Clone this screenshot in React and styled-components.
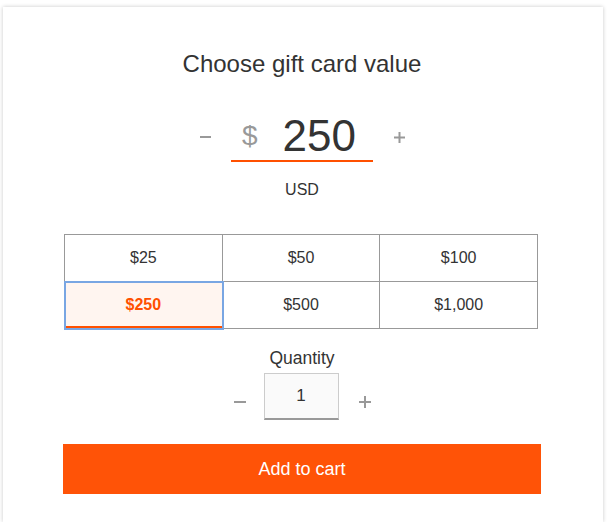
import React, { useState } from "react";
import styled, { createGlobalStyle } from "styled-components";

const GlobalStyle = createGlobalStyle`
  body {
    margin: 0;
    background: #ffffff;
    font-family: "Liberation Sans", Arial, sans-serif;
    color: #333333;
  }
`;

const Page = styled.div`
  padding: 7px 0 0 3px;
`;

const Card = styled.div`
  box-sizing: border-box;
  width: 600px;
  padding: 43px 62px 28px 60px;
  background: #ffffff;
  box-shadow: 0 0 4px rgba(0, 0, 0, 0.22);
  display: flex;
  flex-direction: column;
  align-items: center;
`;

const Title = styled.h1`
  margin: 0;
  font-size: 24px;
  line-height: 28px;
  font-weight: 400;
  color: #333333;
`;

const AmountRow = styled.div`
  margin-top: 34px;
  display: flex;
  align-items: center;
`;

const StepButton = styled.button`
  border: 0;
  background: none;
  padding: 0;
  width: 24px;
  height: 24px;
  margin-left: ${({ shift }) => shift || 0}px;
  display: flex;
  align-items: center;
  justify-content: center;
  color: #999999;
  cursor: pointer;
`;

const QtyStep = styled(StepButton)`
  margin-bottom: 6px;
`;

const AmountField = styled.div`
  box-sizing: border-box;
  margin: 0 14px;
  width: 142px;
  height: 50px;
  padding-left: 11px;
  border-bottom: 2px solid #ff5000;
  display: flex;
  align-items: center;
  gap: 25px;
`;

const Currency = styled.span`
  font-size: 28px;
  color: #999999;
`;

const Amount = styled.span`
  font-size: 44px;
  line-height: 50px;
  color: #333333;
`;

const Unit = styled.div`
  margin-top: 18px;
  font-size: 16px;
  line-height: 20px;
`;

const Options = styled.div`
  margin: 34px 3px 0 1px;
  align-self: stretch;
  display: grid;
  grid-template-columns: repeat(3, 1fr);
  border-top: 1px solid #999999;
  border-left: 1px solid #999999;
`;

const Option = styled.button`
  box-sizing: border-box;
  height: 47px;
  margin: 0;
  border: 0;
  border-right: 1px solid #999999;
  border-bottom: 1px solid #999999;
  background: ${({ active }) => (active ? "#fff5f0" : "#ffffff")};
  color: ${({ active }) => (active ? "#ff5000" : "#333333")};
  font-family: inherit;
  font-size: 16px;
  font-weight: ${({ active }) => (active ? 700 : 400)};
  cursor: pointer;
  position: relative;
  ${({ active }) =>
    active &&
    `
    outline: 2px solid #79a6e3;
    outline-offset: -1px;
    box-shadow: inset 0 -2px 0 #ff5000;
    z-index: 1;
  `}
`;

const QuantityLabel = styled.div`
  margin-top: 19px;
  font-size: 17.5px;
  line-height: 20px;
`;

const QuantityRow = styled.div`
  margin-top: 5px;
  display: flex;
  align-items: flex-end;
  gap: 12px;
`;

const QuantityBox = styled.div`
  box-sizing: border-box;
  width: 75px;
  height: 47px;
  border: 1px solid #cccccc;
  border-bottom: 2px solid #999999;
  background: #fafafa;
  display: flex;
  justify-content: center;
  padding-top: 12px;
  font-size: 17px;
  color: #333333;
`;

const CartButton = styled.button`
  margin-top: 24px;
  align-self: stretch;
  height: 50px;
  border: 0;
  background: #ff5307;
  color: #ffffff;
  font-family: inherit;
  font-size: 18px;
  cursor: pointer;
`;

const Minus = ({ w }) => (
  <svg width={w} height="2" viewBox={`0 0 ${w} 2`}>
    <rect width={w} height="2" fill="currentColor" />
  </svg>
);

const Plus = ({ w }) => (
  <svg width={w} height={w} viewBox={`0 0 ${w} ${w}`}>
    <rect y={w / 2 - 1} width={w} height="2" fill="currentColor" />
    <rect x={w / 2 - 1} width="2" height={w} fill="currentColor" />
  </svg>
);

const values = [25, 50, 100, 250, 500, 1000];

const App = () => {
  const [value, setValue] = useState(250);
  const [qty, setQty] = useState(1);

  return (
    <Page>
      <GlobalStyle />
      <Card>
        <Title>Choose gift card value</Title>
        <AmountRow>
          <StepButton aria-label="Decrease">
            <Minus w={11} />
          </StepButton>
          <AmountField>
            <Currency>$</Currency>
            <Amount>{value}</Amount>
          </AmountField>
          <StepButton aria-label="Increase">
            <Plus w={11} />
          </StepButton>
        </AmountRow>
        <Unit>USD</Unit>
        <Options>
          {values.map((v) => (
            <Option key={v} active={v === value} onClick={() => setValue(v)}>
              ${v.toLocaleString("en-US")}
            </Option>
          ))}
        </Options>
        <QuantityLabel>Quantity</QuantityLabel>
        <QuantityRow>
          <QtyStep onClick={() => setQty(Math.max(1, qty - 1))}>
            <Minus w={12} />
          </QtyStep>
          <QuantityBox>{qty}</QuantityBox>
          <QtyStep shift={2} onClick={() => setQty(qty + 1)}>
            <Plus w={12} />
          </QtyStep>
        </QuantityRow>
        <CartButton>Add to cart</CartButton>
      </Card>
    </Page>
  );
};

export default App;
